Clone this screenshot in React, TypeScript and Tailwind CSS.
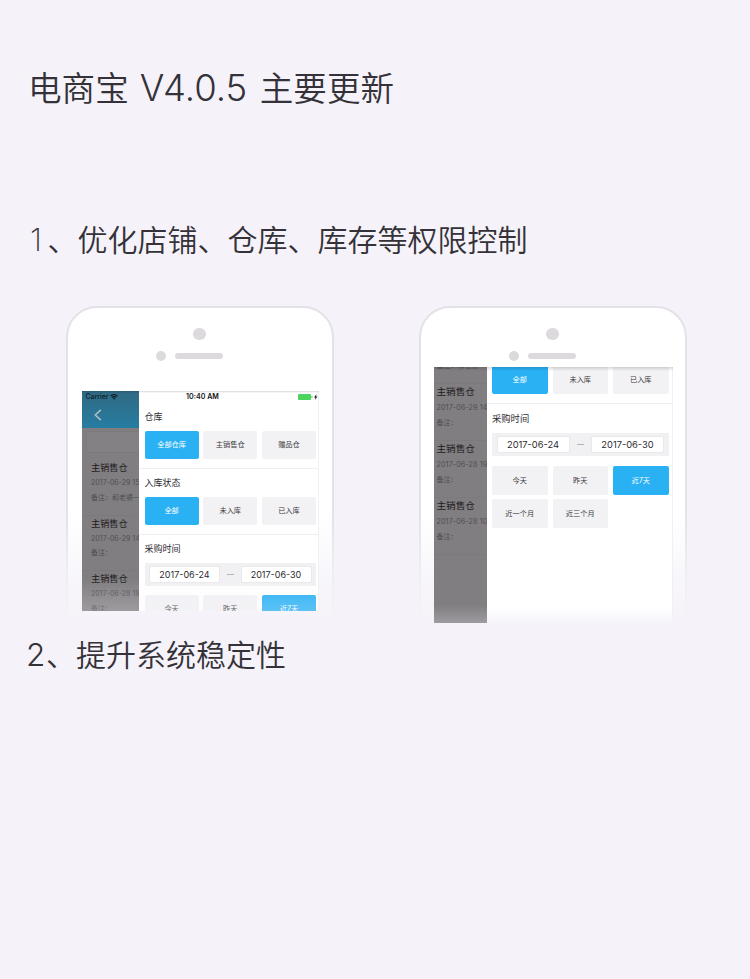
import React from "react";

const cjk = "font-['Inter','Noto_Sans_CJK_SC',sans-serif]";
const cjkTitle = "pb-[4px] font-['Noto_Sans_CJK_SC_DemiLight','Noto_Sans_CJK_SC',sans-serif]";

function Entry({ date, note, wide }: { date: string; note: string; wide?: boolean }) {
  return (
    <div className={`shrink-0 border-b border-[#7c7a7d] whitespace-nowrap ${wide ? "h-[57px] pl-[3px]" : "h-[55.5px] pl-[9px]"}`}>
      <div className={`flex items-center text-[#1d1c1e] ${wide ? "h-[17px] text-[9.6px]" : "h-[16px] text-[9.2px]"}`}>主销售仓</div>
      <div className={`flex items-center text-[#504e52] ${wide ? "h-[15px] text-[7.2px] tracking-[0.1px]" : "h-[15px] text-[6.9px] tracking-[0.1px]"}`}>{date}</div>
      <div className="flex h-[14px] items-center text-[7px] text-[#504e52]">{note}</div>
    </div>
  );
}

function Chip({ label, active, tall }: { label: string; active?: boolean; tall?: boolean }) {
  return (
    <div
      className={`flex items-center justify-center rounded-[2px] text-[7.2px] ${tall ? "h-[29px] pt-px" : "h-[28px]"} ${
        active ? "bg-[#29b1f4] text-white" : "bg-[#f2f1f4] text-[#3c3b40]"
      }`}
    >
      {label}
    </div>
  );
}

function DateRange({ wide }: { wide?: boolean }) {
  const box = `flex h-[17px] items-center justify-center rounded-[2px] border border-[#e9e8eb] bg-white text-[#2c2b30] ${
    wide ? "w-[73px] text-[9.3px]" : "w-[71px] text-[9px]"
  }`;
  return (
    <div className="flex h-[23px] items-center justify-between bg-[#f1f0f3] px-[4.5px]">
      <div className={box}>2017-06-24</div>
      <div className="h-px w-[7px] bg-[#b5b4b8]" />
      <div className={box}>2017-06-30</div>
    </div>
  );
}

function PhoneShell({ children, gap }: { children: React.ReactNode; gap: string }) {
  return (
    <div className="relative h-[318px] w-[268px] shrink-0">
      <div className="absolute inset-0 rounded-t-[31px] border-2 border-b-0 border-[#e4e2e7] bg-white" />
      <div className="absolute -inset-x-px bottom-0 h-[110px] bg-gradient-to-b from-[#f5f3f9]/0 via-[#f5f3f9]/75 via-60% to-[#f5f3f9]" />
      <div className="relative flex flex-col items-center">
        <div className="mt-[22px] mr-[2px] h-[12px] w-[13px] rounded-full bg-[#dcdadd]" />
        <div className="mt-[10.5px] mr-[21px] flex w-[67px] items-center justify-between">
          <div className="size-[10px] rounded-full bg-[#dcdadd]" />
          <div className="h-[6px] w-[48px] rounded-full bg-[#dcdadd]" />
        </div>
        <div className={gap}>{children}</div>
      </div>
    </div>
  );
}

function FirstScreen() {
  return (
    <div className="relative flex h-[220px] w-[237px] overflow-hidden bg-white">
      <div className="flex w-[57px] shrink-0 flex-col overflow-hidden bg-[#807e81]">
        <div className="h-[37px] shrink-0 bg-gradient-to-b from-[#2f6983] to-[#257da1]">
          <div className="flex h-[12px] items-center gap-[2px] pl-[3.5px] text-[6.9px] font-medium text-[#101a20]">
            Carrier
            <svg width="8" height="6" viewBox="0 0 16 12" fill="none" stroke="#101a20" strokeWidth="2.2">
              <path d="M1 4.2a10 10 0 0 1 14 0M3.6 7a6.2 6.2 0 0 1 8.8 0" />
              <path d="M8 11.5 5.7 9.2a3.3 3.3 0 0 1 4.6 0Z" fill="#101a20" stroke="none" />
            </svg>
          </div>
          <svg className="ml-[12px] mt-[6px]" width="8" height="12" viewBox="0 0 8 12" fill="none" stroke="#b0bcc4" strokeWidth="1.6">
            <path d="M6.8 .8 1.3 6l5.5 5.2" />
          </svg>
        </div>
        <div className="mt-[3px] ml-[4px] h-[22px] shrink-0 border border-r-0 border-[#7b797c] bg-[#838184]" />
        <div className="h-[7px] shrink-0" />
        <Entry date="2017-06-29 15" note="备注：和老婆一" />
        <Entry date="2017-06-29 14" note="备注：" />
        <Entry date="2017-06-28 19" note="备注：" />
      </div>
      <div className="w-[180px] shrink-0 border-r border-[#f0eff3]">
        <div className="flex h-[12px] items-center justify-between pl-[47px] text-[7.1px] font-semibold text-[#111]">
          10:40 AM
          <svg width="20" height="8" viewBox="0 0 20 8">
            <rect x="0" y="1" width="13" height="6" rx="1" fill="#4cd45d" />
            <rect x="13.4" y="3" width="1" height="2" fill="#4cd45d" />
            <path d="M18.6 1 16 4.5h1.5L17 7l2.5-3.4H18Z" fill="#222" />
          </svg>
        </div>
        <div className="pr-[2px] pl-[5.5px]">
          <div className="flex h-[27px] items-center text-[9px] text-[#2c2b30]">仓库</div>
          <div className="mt-px grid grid-cols-3 gap-[4.5px]">
            <Chip label="全部仓库" active />
            <Chip label="主销售仓" />
            <Chip label="赠品仓" />
          </div>
        </div>
        <div className="mt-[9px] h-px bg-[#eeedf0]" />
        <div className="pr-[2px] pl-[5.5px]">
          <div className="flex h-[28px] items-center text-[9px] text-[#2c2b30]">入库状态</div>
          <div className="grid grid-cols-3 gap-[4.5px]">
            <Chip label="全部" active />
            <Chip label="未入库" />
            <Chip label="已入库" />
          </div>
        </div>
        <div className="mt-[9px] h-px bg-[#eeedf0]" />
        <div className="pr-[2px] pl-[5.5px]">
          <div className="flex h-[28px] items-center text-[9px] text-[#2c2b30]">采购时间</div>
          <DateRange />
          <div className="mt-[9px] grid grid-cols-3 gap-[4.5px]">
            <Chip label="今天" />
            <Chip label="昨天" />
            <Chip label="近7天" active />
          </div>
        </div>
      </div>
      <div className="absolute inset-x-0 bottom-0 h-[32px] bg-gradient-to-b from-[#f5f3f9]/0 to-[#f5f3f9]/25" />
      <div className="absolute inset-x-0 top-0 h-[2px] bg-gradient-to-b from-black/15 to-transparent" />
    </div>
  );
}

function SecondScreen() {
  return (
    <div className="relative flex h-[256px] w-[239px] overflow-hidden bg-white">
      <div className="flex w-[53px] shrink-0 flex-col overflow-hidden bg-[#807e81]">
        <div className="flex h-[17px] shrink-0 items-start border-b border-[#7c7a7d] pl-[3px] text-[7px] leading-[3px] whitespace-nowrap text-[#504e52]">
          <span className="-mt-[3px]">备注：和老婆一</span>
        </div>
        <Entry date="2017-06-29 14" note="备注：" wide />
        <Entry date="2017-06-28 19" note="备注：" wide />
        <Entry date="2017-06-28 10" note="备注：" wide />
      </div>
      <div className="w-[186px] shrink-0 border-r border-[#f0eff3]">
        <div className="-mt-px pr-[3px] pl-[5.5px]">
          <div className="grid grid-cols-3 gap-[5px]">
            <Chip label="全部" active />
            <Chip label="未入库" />
            <Chip label="已入库" />
          </div>
        </div>
        <div className="mt-[9px] h-px bg-[#eeedf0]" />
        <div className="pr-[3px] pl-[5.5px]">
          <div className="flex h-[29px] items-center text-[9.3px] text-[#2c2b30]">采购时间</div>
          <DateRange wide />
          <div className="mt-[10px] grid grid-cols-3 gap-x-[5px] gap-y-[4px]">
            <Chip label="今天" tall />
            <Chip label="昨天" tall />
            <Chip label="近7天" active tall />
            <Chip label="近一个月" tall />
            <Chip label="近三个月" tall />
          </div>
        </div>
      </div>
      <div className="absolute inset-x-0 bottom-0 h-[18px] bg-gradient-to-b from-[#f5f3f9]/0 to-[#f5f3f9]/25" />
      <div className="absolute inset-x-0 bottom-0 left-[53px] h-[16px] bg-gradient-to-b from-[#f5f3f9]/0 to-[#f5f3f9]/80" />
      <div className="absolute inset-x-0 top-0 h-[4px] bg-gradient-to-b from-black/15 to-transparent" />
    </div>
  );
}

export default function App() {
  return (
    <main className={`h-[979px] w-[750px] overflow-hidden bg-[#f5f3f9] text-[#343238] ${cjk}`}>
      <h1 className="mt-[64px] flex h-[50px] items-center pl-[28px] text-[33.6px] font-[350] whitespace-nowrap">
        <span className={cjkTitle}>电商宝</span>
        <span className="ml-[11px] w-[120px] pb-[2px] text-[36.5px] font-light">V4.0.5</span>
        <span className={cjkTitle}>主要更新</span>
      </h1>
      <h2 className="mt-[106px] flex h-[40px] items-center pl-[30px] text-[30px] font-[350] whitespace-nowrap">
        <span className="w-[17.5px] text-[31.5px] font-extralight">1</span>
        <span className={cjkTitle}>、优化店铺、仓库、库存等权限控制</span>
      </h2>
      <section className="mt-[46px] flex gap-[85px] pl-[66px]">
        <PhoneShell gap="mt-[30.5px] ml-[1px]">
          <FirstScreen />
        </PhoneShell>
        <PhoneShell gap="mt-[6.5px]">
          <SecondScreen />
        </PhoneShell>
      </section>
      <h2 className="mt-[11px] flex h-[40px] items-center pl-[26px] text-[30px] font-[350] whitespace-nowrap">
        <span className="w-[20px] text-[31.5px] font-light">2</span>
        <span className={cjkTitle}>、提升系统稳定性</span>
      </h2>
    </main>
  );
}
